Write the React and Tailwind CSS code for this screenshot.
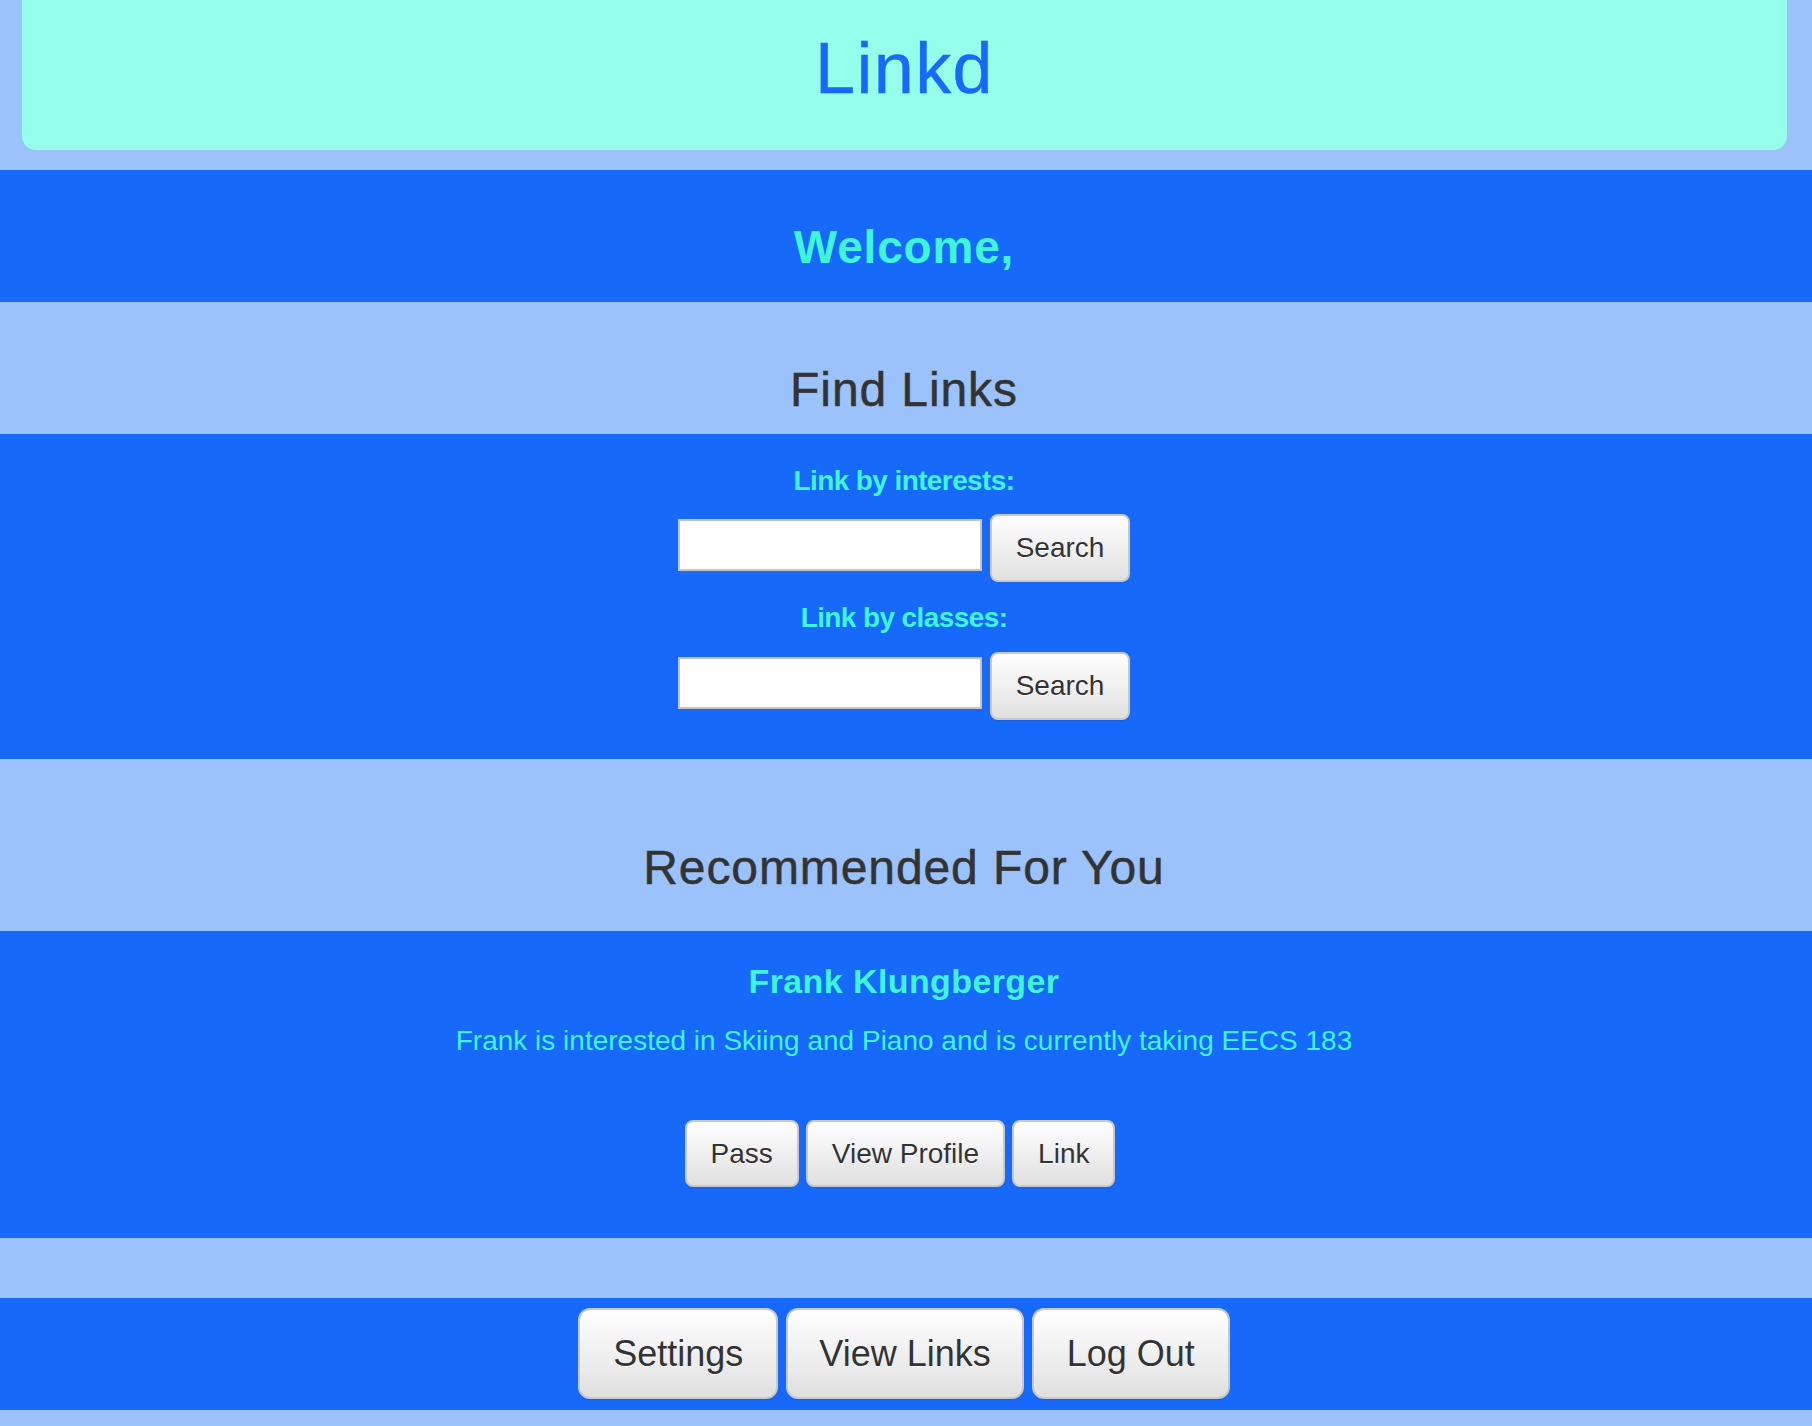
import { useState } from "react"

const btn =
    "rounded-lg border-2 border-[#c9c9c9] bg-gradient-to-b from-white to-[#e0e0e0] text-[#333] [text-shadow:0_1px_0_#fff] shadow-[0_1px_1px_rgba(0,0,0,0.08)]"

const heading = "text-[48px] leading-[48px] tracking-[0.9px] text-[#333] [-webkit-text-stroke:0.5px_#333]"

function SearchRow({ label }) {
    const [value, setValue] = useState("")

    return (
        <>
            <label className="text-[28px] leading-[28px] font-bold tracking-[-0.6px] text-[#3ef5d8]">{label}</label>
            <div className="flex items-start gap-2">
                <input
                    value={value}
                    onChange={(e) => setValue(e.target.value)}
                    className="mt-[5px] w-[304px] h-[52px] bg-white border-2 border-[#c4c4c4] outline-none px-3 text-[24px]"
                />
                <button className={`${btn} px-6 py-3 text-[28px] leading-[40px]`}>Search</button>
            </div>
        </>
    )
}

export default function App() {
    return (
        <div className="min-h-screen bg-[#9bc2fa] font-['Liberation_Sans',Arial,sans-serif] text-center">
            {/* header card */}
            <div className="ml-[22px] mr-[25px] h-[150px] bg-[#96fdeb] rounded-b-[14px] pt-[32px]">
                <h1 className="text-[72px] leading-[72px] tracking-[1.4px] text-[#1769fa] [-webkit-text-stroke:0.4px_#1769fa]">Linkd</h1>
            </div>

            <div className="mt-[20px] h-[132px] bg-[#1769fa] pt-[54px] pr-[4px]">
                <h2 className="text-[46px] leading-[46px] font-bold tracking-[0.8px] text-[#3ef5d8]">Welcome,</h2>
            </div>

            <div className="h-[132px] pt-[64px] pr-[4px]">
                <h2 className={heading}>Find Links</h2>
            </div>

            <div className="h-[325px] bg-[#1769fa] pt-[33px] pr-[4px] flex flex-col items-center">
                <div className="flex flex-col items-center gap-[19px]">
                    <SearchRow label="Link by interests:" />
                </div>
                <div className="mt-[22px] flex flex-col items-center gap-[20px]">
                    <SearchRow label="Link by classes:" />
                </div>
            </div>

            <div className="h-[172px] pt-[85px] pr-[4px]">
                <h2 className={heading}>Recommended For You</h2>
            </div>

            <div className="h-[307px] bg-[#1769fa] pt-[33px] pr-[4px] flex flex-col items-center">
                <h3 className="text-[34px] leading-[34px] font-bold tracking-[0.4px] text-[#3ef5d8]">Frank Klungberger</h3>
                <p className="mt-[29px] text-[28px] leading-[28px] text-[#3ef5d8]">
                    Frank is interested in Skiing and Piano and is currently taking EECS 183
                </p>
                <div className="mt-[65px] mr-[8px] flex gap-[7px]">
                    <button className={`${btn} px-6 py-3 text-[28px] leading-[39px]`}>Pass</button>
                    <button className={`${btn} px-6 py-3 text-[28px] leading-[39px]`}>View Profile</button>
                    <button className={`${btn} px-6 py-3 text-[28px] leading-[39px]`}>Link</button>
                </div>
            </div>

            <div className="h-[60px]"></div>

            <div className="h-[112px] bg-[#1769fa] pt-[10px] pr-[4px] flex justify-center">
                <div className="flex gap-[8px] h-[91px]">
                    <button className={`${btn} rounded-xl px-[33px] text-[36px] leading-[48px]`}>Settings</button>
                    <button className={`${btn} rounded-xl px-[31px] text-[36px] leading-[48px]`}>View Links</button>
                    <button className={`${btn} rounded-xl px-[33px] text-[36px] leading-[48px]`}>Log Out</button>
                </div>
            </div>
        </div>
    )
}
